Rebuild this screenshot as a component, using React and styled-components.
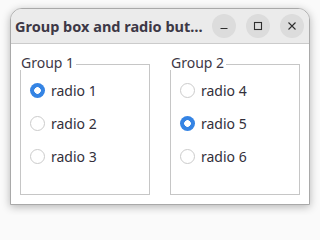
import React, { useState } from "react";
import styled, { createGlobalStyle } from "styled-components";

const GlobalStyle = createGlobalStyle`
  html, body {
    margin: 0;
    padding: 0;
    background: #fafafa;
  }
  body {
    font-family: "Noto Sans", "DejaVu Sans", sans-serif;
    color: #3d3846;
  }
`;

const Desktop = styled.div`
  width: 320px;
  height: 215px;
  box-sizing: border-box;
  padding: 8px 10px 10px;
`;

const Window = styled.div`
  width: 300px;
  height: 197px;
  box-sizing: border-box;
  display: flex;
  flex-direction: column;
  overflow: hidden;
  background: #ffffff;
  border: 1px solid #a9a9a9;
  border-radius: 12px 12px 0 0;
  box-shadow: 0 2px 8px rgba(0, 0, 0, 0.28);
`;

const TitleBar = styled.div`
  flex: none;
  height: 35px;
  box-sizing: border-box;
  display: flex;
  align-items: center;
  gap: 6px;
  padding: 0 5px 0 4px;
  background: #ebebeb;
  border-bottom: 1px solid #cbcbcb;
`;

const Title = styled.div`
  flex: 1;
  min-width: 0;
  font-size: 14.5px;
  font-weight: bold;
  color: #3d3846;
  white-space: nowrap;
  overflow: hidden;
  text-overflow: ellipsis;
`;

const Controls = styled.div`
  display: flex;
  gap: 10px;
`;

const WinButton = styled.button`
  width: 24px;
  height: 24px;
  padding: 0;
  border: none;
  border-radius: 50%;
  background: #dcdcdc;
  color: #2e2e2e;
  display: flex;
  align-items: center;
  justify-content: center;
`;

const Content = styled.div`
  flex: 1;
  display: grid;
  grid-template-columns: 130px 130px;
  column-gap: 20px;
  padding: 12px 10px 9px 9px;
`;

const GroupBox = styled.div`
  display: flex;
  flex-direction: column;
`;

const GroupHeader = styled.div`
  display: flex;
  height: 14px;
`;

const GroupLabel = styled.span`
  font-size: 14px;
  line-height: 14px;
  padding: 0 2px 0 1px;
  white-space: nowrap;
`;

const HeaderLine = styled.span`
  flex: 1;
  margin-top: 8px;
  border-top: 1px solid #c6c6c6;
  border-right: 1px solid #c6c6c6;
`;

const GroupBody = styled.div`
  flex: 1;
  display: flex;
  flex-direction: column;
  gap: 13px;
  padding: 10px 9px;
  border: 1px solid #c6c6c6;
  border-top: none;
`;

const RadioRow = styled.label`
  display: flex;
  align-items: center;
  gap: 6px;
  height: 20px;
  font-size: 14px;
  color: #33303b;
`;

const RadioInput = styled.input`
  appearance: none;
  margin: 0;
  width: 15px;
  height: 15px;
  box-sizing: border-box;
  border-radius: 50%;
  border: 1px solid #cbcbcb;
  background: #ffffff;

  &:checked {
    border: none;
    background: radial-gradient(circle, #ffffff 0 3px, #3584e4 3.6px);
  }
`;

const Icon = ({ kind }) => (
  <svg width="16" height="16" viewBox="0 0 16 16" fill="none" stroke="currentColor" strokeWidth="1.1">
    {kind === "min" && <path d="M4.5 10.5h7" />}
    {kind === "max" && <rect x="4.5" y="4.5" width="7" height="7" />}
    {kind === "close" && <path d="M4.5 4.5l7 7M11.5 4.5l-7 7" />}
  </svg>
);

const groups = [
  { title: "Group 1", name: "g1", items: ["radio 1", "radio 2", "radio 3"], initial: "radio 1" },
  { title: "Group 2", name: "g2", items: ["radio 4", "radio 5", "radio 6"], initial: "radio 5" },
];

const Group = ({ group }) => {
  const [value, setValue] = useState(group.initial);
  return (
    <GroupBox>
      <GroupHeader>
        <GroupLabel>{group.title}</GroupLabel>
        <HeaderLine />
      </GroupHeader>
      <GroupBody>
        {group.items.map((item) => (
          <RadioRow key={item}>
            <RadioInput
              type="radio"
              name={group.name}
              checked={value === item}
              onChange={() => setValue(item)}
            />
            {item}
          </RadioRow>
        ))}
      </GroupBody>
    </GroupBox>
  );
};

const App = () => {
  return (
    <Desktop>
      <GlobalStyle />
      <Window>
        <TitleBar>
          <Title>Group box and radio buttons</Title>
          <Controls>
            <WinButton><Icon kind="min" /></WinButton>
            <WinButton><Icon kind="max" /></WinButton>
            <WinButton><Icon kind="close" /></WinButton>
          </Controls>
        </TitleBar>
        <Content>
          {groups.map((g) => (
            <Group key={g.name} group={g} />
          ))}
        </Content>
      </Window>
    </Desktop>
  );
};

export default App;
